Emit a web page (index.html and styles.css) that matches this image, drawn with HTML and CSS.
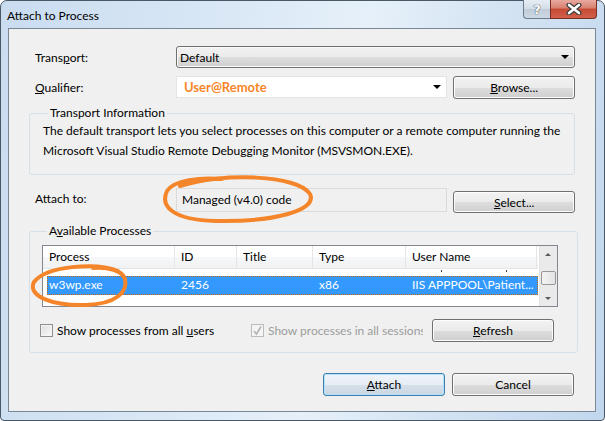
FILE: index.html
```
<!DOCTYPE html>
<html lang="en">
<head>
    <meta charset="UTF-8">
    <title>Attach to Process</title>
    <link rel="stylesheet" href="styles.css">
</head>
<body>

    <div class="window">
        <div class="titlebar">
            <span class="title">Attach to Process</span>
            <div class="caption-btns">
                <span class="cbtn help">?</span>
                <span class="cbtn close">
                    <svg width="20" height="12" viewBox="0 0 20 12">
                        <path d="M5 2 L15 10 M15 2 L5 10" stroke="#3d3d3d" stroke-width="5" stroke-linecap="round"/>
                        <path d="M5 2 L15 10 M15 2 L5 10" stroke="#ffffff" stroke-width="2.6" stroke-linecap="round"/>
                    </svg>
                </span>
            </div>
        </div>

        <div class="client">
            <div class="row row-transport">
                <label class="lbl">Trans<u>p</u>ort:</label>
                <div class="combo combo-list">Default<span class="arrow"></span></div>
            </div>

            <div class="row row-qualifier">
                <label class="lbl"><u>Q</u>ualifier:</label>
                <div class="combo combo-edit"><span class="remote">User@Remote</span><span class="arrow"></span></div>
                <button class="btn"><u>B</u>rowse...</button>
            </div>

            <fieldset class="group group-info">
                <legend>Transport Information</legend>
                <p>The default transport lets you select processes on this computer or a remote computer running the<br>
                Microsoft Visual Studio Remote Debugging Monitor (MSVSMON.EXE).</p>
            </fieldset>

            <div class="row row-attach">
                <label class="lbl">Attach to:</label>
                <div class="readonly">Managed (v4.0) code</div>
                <button class="btn btn-low"><u>S</u>elect...</button>
            </div>

            <fieldset class="group group-procs">
                <legend>A<u>v</u>ailable Processes</legend>

                <div class="listview">
                    <div class="lv-main">
                        <div class="lv-head">
                            <span class="c1">Process</span>
                            <span class="c2">ID</span>
                            <span class="c3">Title</span>
                            <span class="c4">Type</span>
                            <span class="c5">User Name</span>
                        </div>
                        <div class="lv-body">
                            <!-- row scrolled almost out of view, only a few descenders show -->
                            <div class="lv-row lv-clipped">
                                <span class="dot dot-a"></span>
                                <span class="dot dot-b"></span>
                            </div>
                            <div class="lv-row selected">
                                <span class="c1">w3wp.exe</span>
                                <span class="c2">2456</span>
                                <span class="c3"></span>
                                <span class="c4">x86</span>
                                <span class="c5">IIS APPPOOL\Patient...</span>
                            </div>
                        </div>
                    </div>
                    <div class="scrollbar">
                        <span class="sb-arrow up"></span>
                        <span class="sb-track"><span class="sb-thumb"></span></span>
                        <span class="sb-arrow down"></span>
                    </div>
                </div>

                <div class="options">
                    <label class="check"><span class="box"></span><span>Show processes from all <u>u</u>sers</span></label>
                    <label class="check disabled"><span class="box checked">
                        <svg width="11" height="11" viewBox="0 0 11 11"><path d="M2 6 L4.5 9 L9 1.5" fill="none" stroke="#b4b4b4" stroke-width="1.6"/></svg>
                    </span><span>Show processes in all sessions</span></label>
                    <button class="btn btn-refresh"><u>R</u>efresh</button>
                </div>
            </fieldset>

            <div class="footer">
                <button class="btn btn-default"><u>A</u>ttach</button>
                <button class="btn">Cancel</button>
            </div>
        </div>

        <!-- hand drawn marks over the screenshot -->
        <svg class="marks" width="605" height="421" viewBox="0 0 605 421">
            <path d="M180 186 C222 172 298 175 310 194 C318 211 272 222 216 221 C172 220 160 206 167 191 C174 180 200 177 222 179" fill="none" stroke="#f5852a" stroke-width="4" stroke-linecap="round"/>
            <path d="M118 271 C96 262 46 266 34 282 C27 296 52 306 86 305 C116 304 128 292 125 279 C122 270 108 267 93 268" fill="none" stroke="#f5852a" stroke-width="4" stroke-linecap="round"/>
        </svg>
    </div>

</body>
</html>
```

FILE: styles.css
```
body {
    margin: 0;
    padding: 0;
    background: #ffffff;
    font-family: "Lato", "Liberation Sans", sans-serif;
    font-size: 12px;
    color: #000;
}

.window {
    position: relative;
    width: 605px;
    height: 421px;
    box-sizing: border-box;
    padding: 0 8px 8px 7px;
    border: 1px solid #4a5866;
    border-radius: 7px 7px 4px 4px;
    background: linear-gradient(100deg, #c9dcf0 0%, #dae8f6 35%, #e6f0f9 55%, #d3e3f3 75%, #c2d7ee 100%);
    display: flex;
    flex-direction: column;
}

.titlebar {
    height: 27px;
    display: flex;
    justify-content: space-between;
    align-items: flex-start;
}

.title {
    margin-top: 7px;
    margin-left: -1px;
    font-size: 12px;
    color: #000;
}

.caption-btns {
    display: flex;
    margin-top: -1px;
    margin-right: -1px;
}

.cbtn {
    height: 19px;
    display: flex;
    align-items: center;
    justify-content: center;
    box-sizing: border-box;
    border: 1px solid #6e7c8a;
    border-top: none;
}

.help {
    width: 27px;
    border-radius: 0 0 0 4px;
    border-right: none;
    background: linear-gradient(#e6edf4 0%, #d3dde8 50%, #c0ccd9 51%, #cdd8e4 100%);
    color: #fff;
    font-family: "DejaVu Sans", sans-serif;
    font-weight: bold;
    font-size: 13px;
    text-shadow: 0 0 1px #3d4650, 0 0 1px #3d4650;
}

.close {
    width: 47px;
    border-radius: 0 0 4px 0;
    border-color: #7a2d22;
    background: linear-gradient(#e8a99e 0%, #d8806f 45%, #c54a33 50%, #d2604a 100%);
}

.client {
    flex: 1;
    background: #f0f0f0;
    border: 1px solid #7b8794;
    padding: 17px 20px 0 20px;
}

.row {
    display: flex;
    align-items: center;
    padding-left: 6px;
}

.lbl {
    width: 141px;
    flex: none;
}

.row-transport {
    height: 22px;
}

.row-qualifier {
    height: 23px;
    margin-top: 8px;
    gap: 6px;
}

.row-qualifier .lbl {
    margin-right: -6px;
}

.combo {
    position: relative;
    box-sizing: border-box;
    height: 22px;
    display: flex;
    align-items: center;
    padding-left: 8px;
}

.combo-list {
    width: 400px;
    border: 1px solid #707070;
    border-radius: 3px;
    background: linear-gradient(#f2f2f2 0%, #ebebeb 50%, #dddddd 51%, #cfcfcf 100%);
    box-shadow: inset 0 0 0 1px #fbfbfb;
    padding-left: 3px;
}

.combo-edit {
    width: 272px;
    align-self: flex-start;
    border: 1px solid #e2e5e8;
    background: #ffffff;
    padding-left: 7px;
}

.remote {
    color: #f7862b;
    font-weight: bold;
    font-size: 13px;
}

.arrow {
    position: absolute;
    right: 5px;
    top: 8px;
    border-left: 4px solid transparent;
    border-right: 4px solid transparent;
    border-top: 4px solid #000;
}

.btn {
    width: 122px;
    height: 23px;
    box-sizing: border-box;
    border: 1px solid #707070;
    border-radius: 3px;
    background: linear-gradient(#f2f2f2 0%, #ebebeb 50%, #dddddd 51%, #cfcfcf 100%);
    box-shadow: inset 0 0 0 1px #fcfcfc;
    font: inherit;
    color: #000;
    padding: 0;
}

.group {
    margin: 6px 0 0 0;
    padding: 0 10px 13px 13px;
    border: 1px solid #d5dfe5;
    border-radius: 3px;
}

.group legend {
    padding: 0 2px;
    margin-left: 5px;
    line-height: 16px;
}

.group-info p {
    margin: 0;
    line-height: 20px;
}

.row-attach {
    margin-top: 13px;
    height: 25px;
    align-items: flex-start;
    gap: 6px;
}

.row-attach .lbl {
    margin-right: -6px;
    line-height: 22px;
}

.readonly {
    width: 272px;
    height: 24px;
    box-sizing: border-box;
    border: 1px solid #dadada;
    background: #f0f0f0;
    padding-left: 5px;
    line-height: 21px;
}

.btn-low {
    margin-top: 3px;
    height: 22px;
}

.group-procs {
    margin-top: 10px;
    padding: 6px 19px 10px 12px;
}

.listview {
    display: flex;
    height: 62px;
    box-sizing: border-box;
    border: 1px solid #828790;
    background: #ffffff;
}

.lv-main {
    flex: 1;
    overflow: hidden;
}

.lv-head,
.lv-row {
    display: flex;
}

.lv-head {
    height: 22px;
    align-items: center;
    background: linear-gradient(#ffffff 0%, #ffffff 50%, #f6f7f9 51%, #f1f2f4 100%);
    border-bottom: 1px solid #e5e5e5;
}

.lv-head span {
    box-sizing: border-box;
    height: 22px;
    line-height: 22px;
    border-right: 1px solid #e3e5e7;
}

.lv-head span,
.lv-row span {
    padding-left: 6px;
    white-space: nowrap;
    overflow: hidden;
    box-sizing: border-box;
}

.c1 { width: 132px; }
.c2 { width: 62px; }
.c3 { width: 76px; }
.c4 { width: 93px; }
.c5 { width: 131px; }

.lv-body {
    height: 38px;
    overflow: hidden;
}

.lv-row {
    height: 19px;
    line-height: 18px;
}

.lv-clipped {
    height: 7px;
    position: relative;
}

.lv-row .dot {
    position: absolute;
    top: 1px;
    width: 1px;
    height: 2px;
    padding: 0;
    background: #444;
}

.dot-a { left: 398px; }
.dot-b { left: 463px; }

.selected {
    margin-left: 4px;
    width: 491px;
    background: #3399ff;
    color: #ffffff;
    outline: 1px dotted #cc6600;
    outline-offset: -1px;
}

.selected .c1 {
    width: 128px;
    padding-left: 2px;
}

.scrollbar {
    width: 17px;
    margin-left: 1px;
    display: flex;
    flex-direction: column;
    background: #eaeaea;
    border-left: 1px solid #e3e3e3;
}

.sb-arrow {
    height: 17px;
    position: relative;
}

.sb-arrow::after {
    content: "";
    position: absolute;
    left: 5px;
    border-left: 3px solid transparent;
    border-right: 3px solid transparent;
}

.up::after {
    top: 7px;
    border-bottom: 3px solid #5a5a5a;
}

.down::after {
    top: 8px;
    border-top: 3px solid #5a5a5a;
}

.sb-track {
    flex: 1;
    position: relative;
}

.sb-thumb {
    position: absolute;
    left: 1px;
    right: 1px;
    top: 8px;
    height: 14px;
    box-sizing: border-box;
    border: 1px solid #979797;
    border-radius: 2px;
    background: linear-gradient(90deg, #f4f4f4, #e3e3e3);
}

.options {
    display: flex;
    align-items: center;
    margin-top: 11px;
    height: 24px;
}

.check {
    display: flex;
    align-items: center;
    white-space: nowrap;
}

.box {
    width: 13px;
    height: 13px;
    flex: none;
    box-sizing: border-box;
    border: 1px solid #8f8f8f;
    background: linear-gradient(135deg, #dcdcdc, #fbfbfb);
    box-shadow: inset 0 0 0 1px #f4f4f4;
    margin-right: 4px;
    display: flex;
    align-items: center;
    justify-content: center;
}

.check:first-child {
    margin-left: -2px;
    width: 211px;
}

.disabled {
    color: #9c9c9c;
    width: 172px;
    overflow: hidden;
}

.disabled .box {
    border-color: #bcbcbc;
    background: #f4f4f4;
}

.btn-refresh {
    margin-left: 9px;
}

.footer {
    display: flex;
    justify-content: flex-end;
    gap: 7px;
    margin-top: 20px;
    margin-right: 1px;
}

.footer .btn {
    width: 122px;
}

.btn-default {
    border-color: #3c7fb1;
    background: linear-gradient(#f0f5fa 0%, #e6edf3 50%, #d6e0ea 51%, #cad6e2 100%);
    box-shadow: inset 0 0 0 1px #b3e0fa;
}

.marks {
    position: absolute;
    left: -1px;
    top: -1px;
    pointer-events: none;
}
```
